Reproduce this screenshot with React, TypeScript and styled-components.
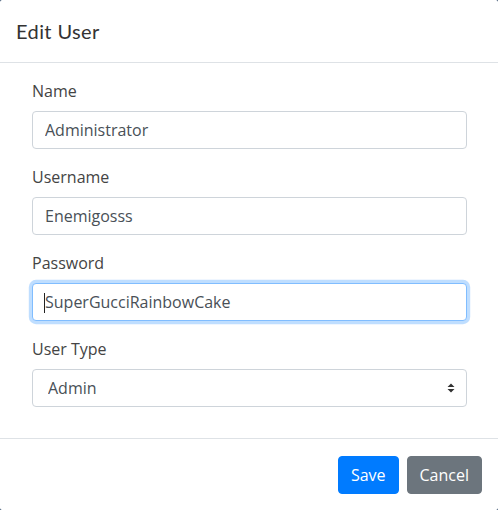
import React from 'react';
import styled, { createGlobalStyle, css } from 'styled-components';

const GlobalStyle = createGlobalStyle`
  html, body {
    margin: 0;
    padding: 0;
    background: #1f3a5c;
  }
  body {
    font-family: "Open Sans", "Liberation Sans", sans-serif;
    font-size: 16px;
    line-height: 1.5;
    color: #444;
  }
  * { box-sizing: border-box; }
`

const Modal = styled.div`
  width: 498px;
  height: 510px;
  background: #fff;
  border-radius: 2px;
  display: flex;
  flex-direction: column;
  overflow: hidden;
`

const Header = styled.div`
  height: 63px;
  padding: 16px;
  border-bottom: 1px solid #dee2e6;
  display: flex;
  align-items: center;
`

const Title = styled.h5`
  margin: 0;
  font-family: Lato, "Open Sans", sans-serif;
  font-weight: 400;
  font-size: 20px;
  line-height: 1.5;
  color: #333;
  letter-spacing: 0.4px;
`

const Body = styled.form`
  padding: 16px 31px 0 32px;
  border-bottom: 1px solid #dee2e6;
  flex: 1;
`

const Group = styled.div`
  margin-bottom: 16px;
  display: flex;
  flex-direction: column;
`

const Label = styled.label`
  display: block;
  margin-bottom: 8px;
  color: #444;
  line-height: 24px;
`

const FieldWrap = styled.div`
  position: relative;
`

const fieldBase = css`
  display: block;
  width: 100%;
  height: 38px;
  padding: 6px 12px;
  font-family: "Open Sans", "Liberation Sans", sans-serif;
  font-size: 16px;
  line-height: 24px;
  color: #495057;
  background: #fff;
  border: 1px solid #ced4da;
  border-radius: 4px;
  outline: none;
  caret-color: transparent;
`

const Input = styled.input<{ $focused?: boolean }>`
  ${fieldBase}
  ${p => p.$focused && css`
    border-color: #80bdff;
    box-shadow: 0 0 0 3.2px rgba(0, 123, 255, 0.25);
  `}
`

const Caret = styled.span`
  position: absolute;
  left: 12px;
  top: 10px;
  width: 1px;
  height: 20px;
  background: #222;
`

const Select = styled.select`
  ${fieldBase}
  padding-left: 15px;
  appearance: none;
  -webkit-appearance: none;
`

const SelectArrow = styled.svg`
  position: absolute;
  right: 12px;
  top: 14px;
  pointer-events: none;
`

const Footer = styled.div`
  height: 71px;
  padding: 16px;
  display: flex;
  justify-content: flex-end;
  align-items: center;
  gap: 8px;
`

const Button = styled.button<{ $variant: 'primary' | 'secondary' }>`
  height: 38px;
  padding: 6px 12px;
  font-family: "Open Sans", "Liberation Sans", sans-serif;
  font-size: 16px;
  line-height: 24px;
  color: #fff;
  border: 1px solid transparent;
  border-radius: 4px;
  background: ${p => (p.$variant === 'primary' ? '#007bff' : '#6c757d')};
  border-color: ${p => (p.$variant === 'primary' ? '#007bff' : '#6c757d')};
`

export default function App() {
  return (
    <>
      <GlobalStyle />
      <Modal>
        <Header>
          <Title>Edit User</Title>
        </Header>
        <Body onSubmit={e => e.preventDefault()}>
          <Group>
            <Label>Name</Label>
            <Input defaultValue="Administrator" />
          </Group>
          <Group>
            <Label>Username</Label>
            <Input defaultValue="Enemigosss" />
          </Group>
          <Group>
            <Label>Password</Label>
            <FieldWrap>
              <Input $focused defaultValue="SuperGucciRainbowCake" />
              <Caret />
            </FieldWrap>
          </Group>
          <Group>
            <Label>User Type</Label>
            <FieldWrap>
              <Select defaultValue="admin">
                <option value="admin">Admin</option>
                <option value="user">User</option>
              </Select>
              <SelectArrow width="8" height="10" viewBox="0 0 8 10">
                <path d="M4 0.5 L7.5 4 L0.5 4 Z M0.5 6 L7.5 6 L4 9.5 Z" fill="#333" />
              </SelectArrow>
            </FieldWrap>
          </Group>
        </Body>
        <Footer>
          <Button $variant="primary">Save</Button>
          <Button $variant="secondary">Cancel</Button>
        </Footer>
      </Modal>
    </>
  );
}
